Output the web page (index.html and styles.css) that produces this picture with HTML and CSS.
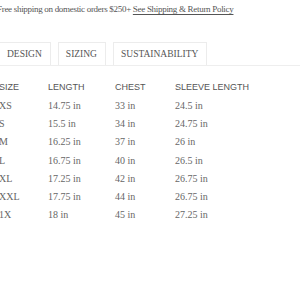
FILE: index.html
```html
<!DOCTYPE html>
<html>
<head>
<meta charset="utf-8">
<link rel="stylesheet" href="styles.css">
</head>
<body>
<div class="page">
  <p class="ship">Free shipping on domestic orders $250+ <a href="#">See Shipping &amp; Return Policy</a></p>
  <div class="tabs">
    <div class="tab first">DESIGN</div>
    <div class="tab active">SIZING</div>
    <div class="tab">SUSTAINABILITY</div>
  </div>
  <table class="sizes">
    <thead>
      <tr><th>SIZE</th><th>LENGTH</th><th>CHEST</th><th>SLEEVE LENGTH</th></tr>
    </thead>
    <tbody>
      <tr><td>XS</td><td>14.75 in</td><td>33 in</td><td>24.5 in</td></tr>
      <tr><td>S</td><td>15.5 in</td><td>34 in</td><td>24.75 in</td></tr>
      <tr><td>M</td><td>16.25 in</td><td>37 in</td><td>26 in</td></tr>
      <tr><td>L</td><td>16.75 in</td><td>40 in</td><td>26.5 in</td></tr>
      <tr><td>XL</td><td>17.25 in</td><td>42 in</td><td>26.75 in</td></tr>
      <tr><td>XXL</td><td>17.75 in</td><td>44 in</td><td>26.75 in</td></tr>
      <tr><td>1X</td><td>18 in</td><td>45 in</td><td>27.25 in</td></tr>
    </tbody>
  </table>
</div>
</body>
</html>
```
FILE: styles.css
```css
html, body {
  margin: 0;
  padding: 0;
  background: #fff;
}
.page {
  margin-left: -5px;
  font-family: "Liberation Serif", "Times New Roman", serif;
  color: #5a5a5a;
}
.ship {
  margin: 0 0 0 2px;
  padding-top: 2px;
  font-size: 9px;
  letter-spacing: -0.3px;
  line-height: 14px;
  color: #555;
}
.ship a {
  color: #555;
  text-decoration: underline;
  text-underline-offset: 2px;
}
.tabs {
  display: flex;
  gap: 7px;
  margin-top: 26px;
  border-bottom: 1px solid #eeeeee;
}
.tab {
  border: 1px solid #ececec;
  border-bottom: none;
  padding: 0 8px 0 7px;
  height: 22px;
  line-height: 22px;
  font-size: 9.5px;
  color: #555;
}
.tab.first {
  margin-left: -10px;
  padding-left: 21px;
}
.sizes {
  border-collapse: collapse;
  margin-top: 12px;
  margin-left: 4px;
}
.sizes th {
  font-family: "Liberation Sans", Arial, sans-serif;
  font-weight: normal;
  font-size: 9px;
  color: #555;
  text-align: left;
  padding: 0;
  height: 18px;
}
.sizes td {
  font-size: 10px;
  color: #666;
  padding: 0;
  height: 18.3px;
}
.sizes th:nth-child(1), .sizes td:nth-child(1) { width: 49px; }
.sizes th:nth-child(2), .sizes td:nth-child(2) { width: 67px; }
.sizes th:nth-child(3), .sizes td:nth-child(3) { width: 60px; }
```
